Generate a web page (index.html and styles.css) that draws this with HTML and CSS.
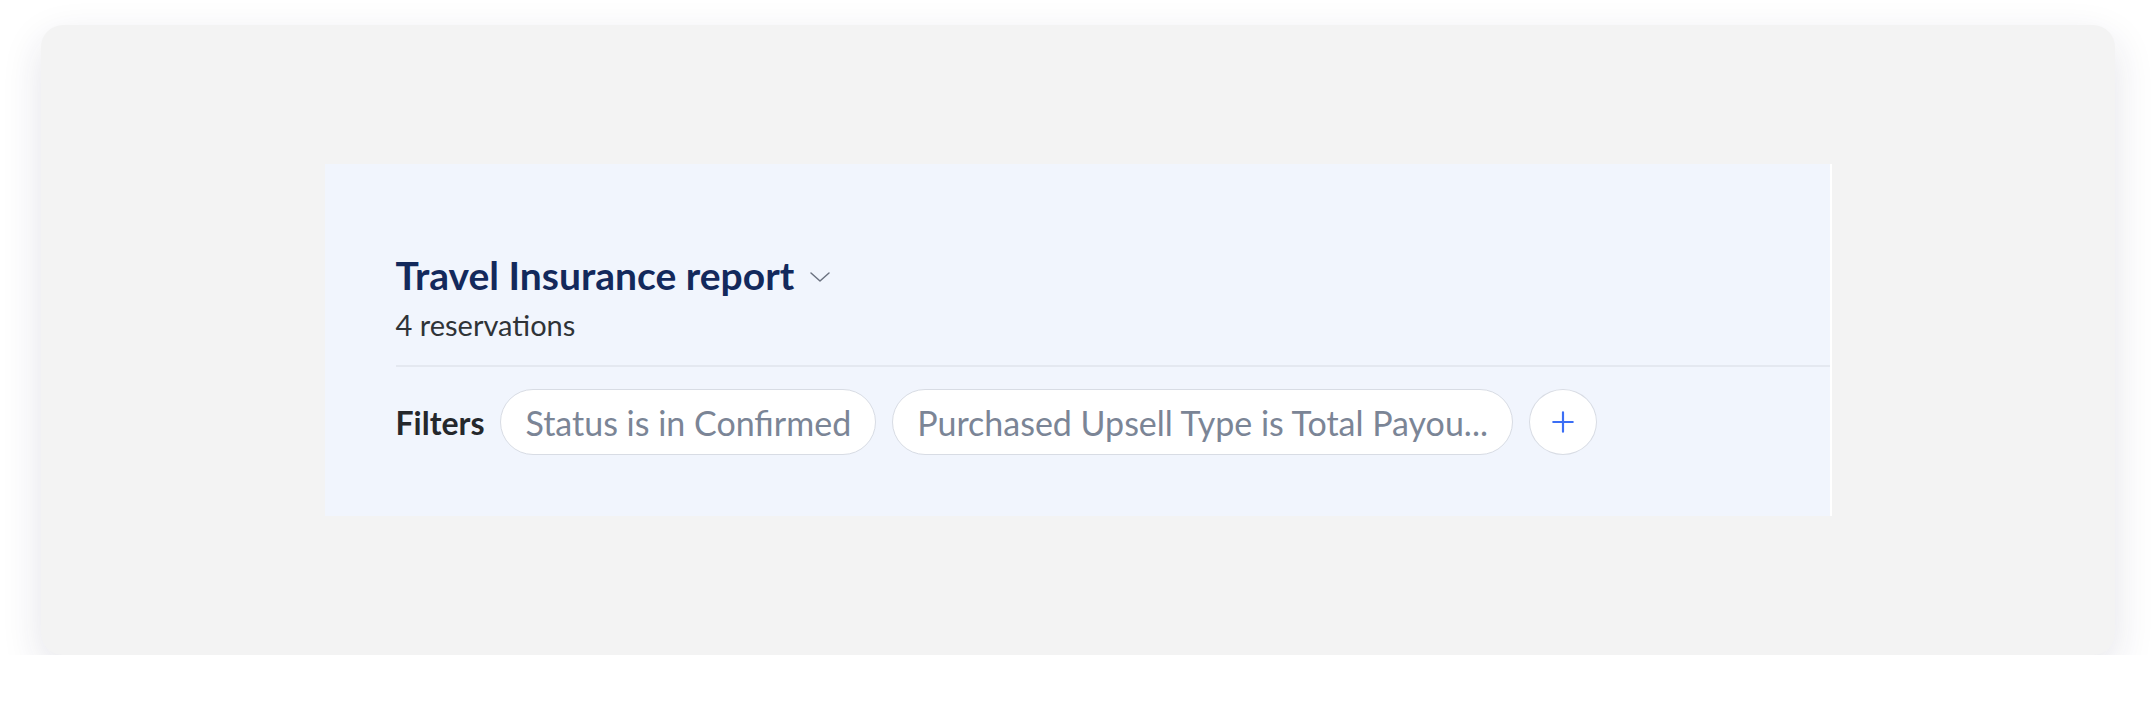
FILE: index.html
```html
<!DOCTYPE html>
<html lang="en">
<head>
    <meta charset="UTF-8">
    <meta name="viewport" content="width=device-width, initial-scale=1.0">
    <title>Travel Insurance report</title>
    <link rel="stylesheet" href="styles.css">
</head>
<body>
    <div class="frame">
        <div class="report">
            <div class="report-head">
                <h1 class="report-title">
                    Travel Insurance report
                    <svg class="chevron" viewBox="0 0 24 24" width="24" height="24" fill="none" stroke="#6b7280" stroke-width="1.5" stroke-linecap="round" stroke-linejoin="round"><path d="M3 8l9 8 9-8"/></svg>
                </h1>
                <div class="report-count">4 reservations</div>
            </div>

            <div class="filters">
                <span class="filters-label">Filters</span>
                <div class="pill">Status is in Confirmed</div>
                <div class="pill">Purchased Upsell Type is Total Payou...</div>
                <div class="pill-add">
                    <svg viewBox="0 0 24 24" width="26" height="26" fill="none" stroke="#3b6ef5" stroke-width="2" stroke-linecap="round"><path d="M12 3v18M3 12h18"/></svg>
                </div>
            </div>
        </div>
    </div>
</body>
</html>
```

FILE: styles.css
```css
body {
    font-family: Lato, "Noto Sans", sans-serif;
    margin: 0;
    padding: 0;
    background-color: #fff;
    color: #333;
}
.frame {
    margin: 25px 41px 0;
    height: 630px;
    background-color: #f3f3f3;
    border-radius: 22px;
    box-shadow: 0 14px 40px rgba(30, 35, 70, 0.12);
    display: flex;
    justify-content: center;
    align-items: center;
}
.report {
    width: 1507px;
    height: 352px;
    box-sizing: border-box;
    padding: 87px 0 0 71px;
    background-color: #f1f5fd;
    border-right: 2px solid #fff;
}
.report-head {
    padding-bottom: 24px;
    border-bottom: 2px solid #e4e8f0;
}
.report-title {
    margin: 0;
    display: flex;
    align-items: center;
    gap: 14px;
    font-size: 39px;
    font-weight: 700;
    color: #13295c;
    line-height: 48px;
}
.chevron {
    margin-top: 4px;
}
.report-count {
    margin-top: 10px;
    font-size: 29px;
    color: #2f3337;
    line-height: 32px;
}
.filters {
    display: flex;
    align-items: center;
    gap: 16px;
    padding-top: 22px;
}
.filters-label {
    font-size: 32px;
    font-weight: 700;
    color: #25282c;
}
.pill {
    height: 66px;
    box-sizing: border-box;
    padding: 0 24px;
    display: flex;
    align-items: center;
    background-color: #fff;
    border: 1.5px solid #d8dce4;
    border-radius: 33px;
    font-size: 34px;
    color: #7b8596;
    white-space: nowrap;
}
.pill-add {
    width: 68px;
    height: 66px;
    box-sizing: border-box;
    display: flex;
    justify-content: center;
    align-items: center;
    background-color: #fff;
    border: 1.5px solid #d8dce4;
    border-radius: 50%;
}
```
